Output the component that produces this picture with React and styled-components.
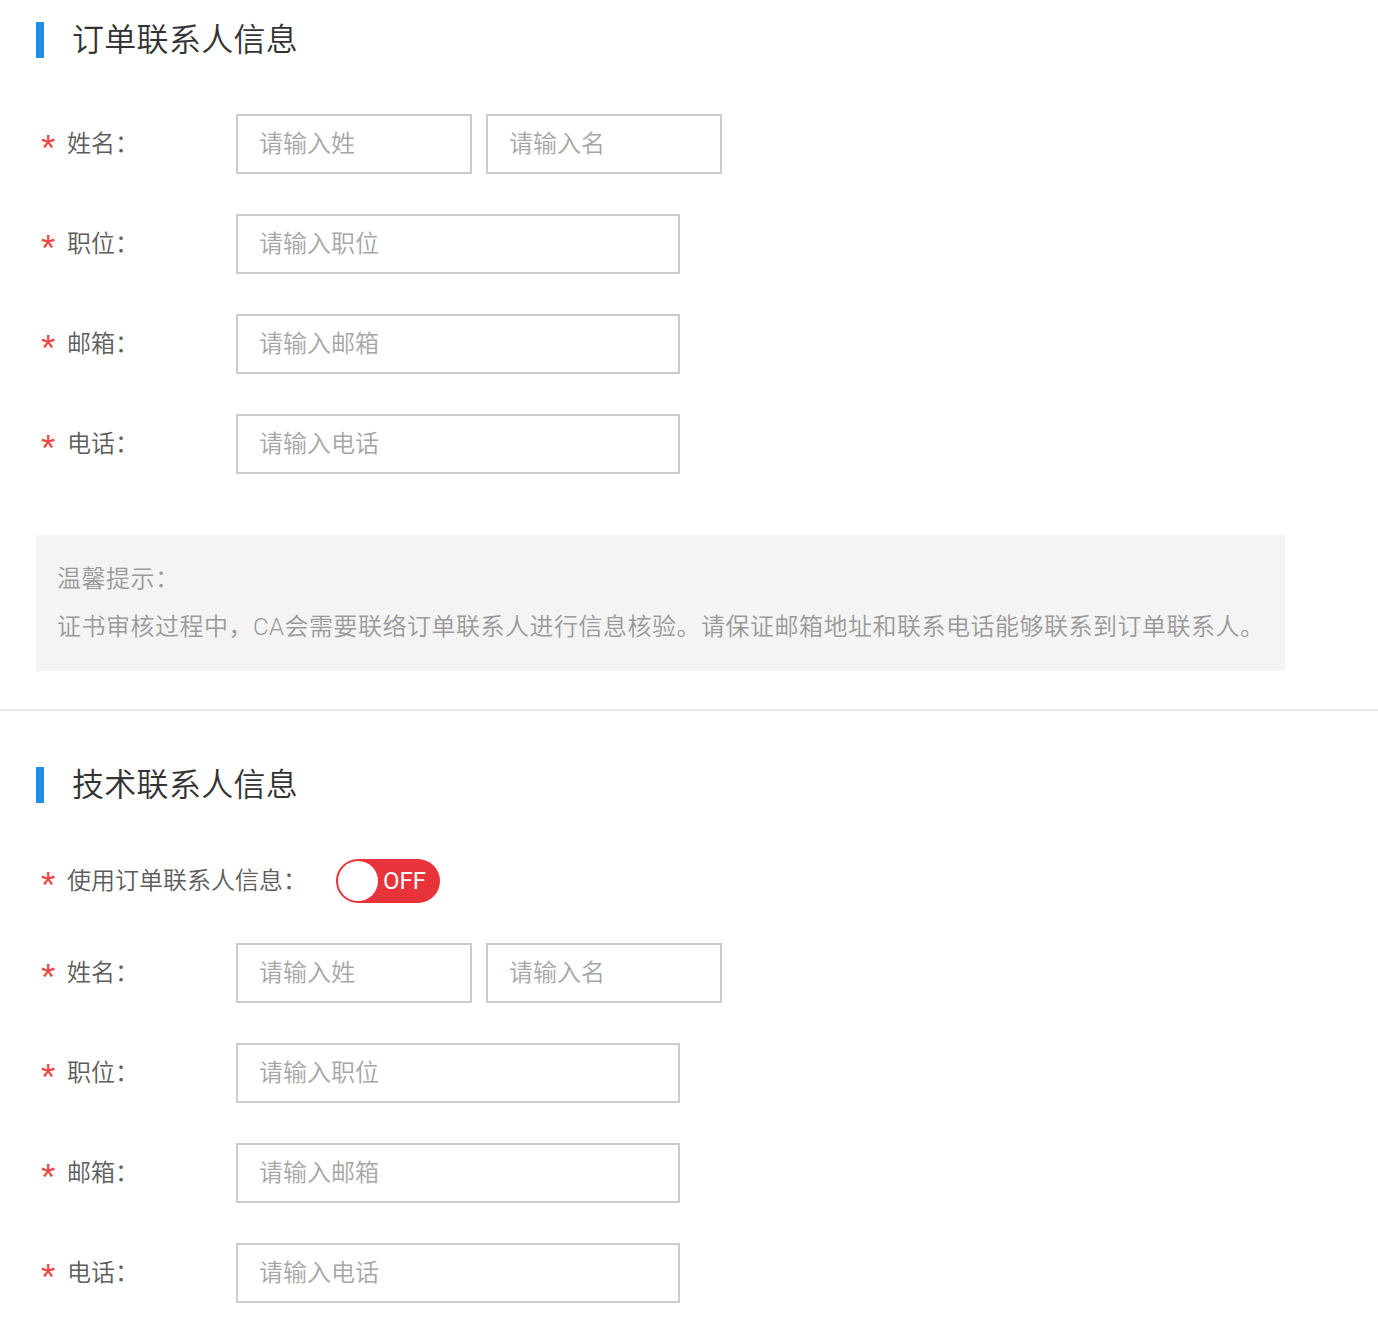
import React from 'react';
import styled, { createGlobalStyle } from 'styled-components';

const GlobalStyle = createGlobalStyle`
	body {
		margin: 0;
		background: #fff;
		font-family: Roboto, "Noto Sans CJK SC", sans-serif;
	}
	* {
		box-sizing: border-box;
	}
`;

const Page = styled.div`
	width: 1378px;
	padding: 22px 0 33px;
`;

const Section = styled.section`
	padding: ${(p) => (p.$first ? '0' : '56px')} 36px 0;
`;

const Title = styled.h2`
	margin: 0;
	height: 36px;
	display: flex;
	align-items: center;
	border-left: 8px solid #1e8ee8;
	padding-left: 28px;
	font-size: 32px;
	font-weight: 350;
	letter-spacing: 0.3px;
	line-height: 36px;
	color: #333;
`;

const Form = styled.div`
	margin-top: 56px;
	display: flex;
	flex-direction: column;
	gap: 40px;
`;

const Row = styled.div`
	display: flex;
	align-items: center;
`;

const Label = styled.label`
	display: flex;
	align-items: center;
	width: ${(p) => (p.$auto ? 'auto' : '200px')};
	margin-right: ${(p) => (p.$auto ? '29px' : '0')};
	font-size: 24px;
	font-weight: 350;
	line-height: 34px;
	color: #5c5c5c;
`;

const Star = styled.span`
	width: 26px;
	margin-left: 5px;
	font-family: "Liberation Sans", Arial, sans-serif;
	font-size: 37px;
	font-weight: 400;
	line-height: 34px;
	color: #ef4747;
	transform: translateY(5px);
`;

const Group = styled.div`
	display: flex;
	gap: 14px;
`;

const Input = styled.input`
	width: ${(p) => p.$w || 444}px;
	height: 60px;
	border: 2px solid #cccccc;
	padding: 0 21px;
	font-family: inherit;
	font-size: 24px;
	font-weight: 350;
	color: #333;
	outline: none;
	&::placeholder {
		color: #a6a6a6;
	}
`;

const Tip = styled.div`
	margin-top: 61px;
	width: 1249px;
	padding: 20px 21px;
	background: #f4f4f4;
	font-size: 24px;
	font-weight: 350;
	letter-spacing: 0.5px;
	line-height: 48px;
	color: #9a9a9a;
	white-space: nowrap;
`;

const Divider = styled.hr`
	margin: 38px 0 0;
	border: 0;
	height: 2px;
	background: #e6e6ea;
`;

const Switch = styled.button`
	display: flex;
	align-items: center;
	width: 104px;
	height: 44px;
	padding: 0 2px;
	border: 0;
	border-radius: 22px;
	background: #e8333a;
	font-family: inherit;
	font-size: 24px;
	color: #fff;
	cursor: pointer;
`;

const Knob = styled.span`
	width: 40px;
	height: 40px;
	border-radius: 50%;
	background: #fff;
`;

const SwitchText = styled.span`
	margin-left: 5px;
	line-height: 1;
`;

function Field({ label, children }) {
	return (
		<Row>
			<Label>
				<Star>*</Star>
				{label}：
			</Label>
			{children}
		</Row>
	);
}

function ContactFields() {
	return (
		<>
			<Field label="姓名">
				<Group>
					<Input $w={236} placeholder="请输入姓" />
					<Input $w={236} placeholder="请输入名" />
				</Group>
			</Field>
			<Field label="职位">
				<Input placeholder="请输入职位" />
			</Field>
			<Field label="邮箱">
				<Input placeholder="请输入邮箱" />
			</Field>
			<Field label="电话">
				<Input placeholder="请输入电话" />
			</Field>
		</>
	);
}

export default function App() {
	return (
		<Page>
			<GlobalStyle />
			<Section $first>
				<Title>订单联系人信息</Title>
				<Form>
					<ContactFields />
				</Form>
				<Tip>
					<div>温馨提示：</div>
					<div>证书审核过程中，CA会需要联络订单联系人进行信息核验。请保证邮箱地址和联系电话能够联系到订单联系人。</div>
				</Tip>
			</Section>
			<Divider />
			<Section>
				<Title>技术联系人信息</Title>
				<Form>
					<Row>
						<Label $auto>
							<Star>*</Star>
							使用订单联系人信息：
						</Label>
						<Switch type="button">
							<Knob />
							<SwitchText>OFF</SwitchText>
						</Switch>
					</Row>
					<ContactFields />
				</Form>
			</Section>
		</Page>
	);
}
